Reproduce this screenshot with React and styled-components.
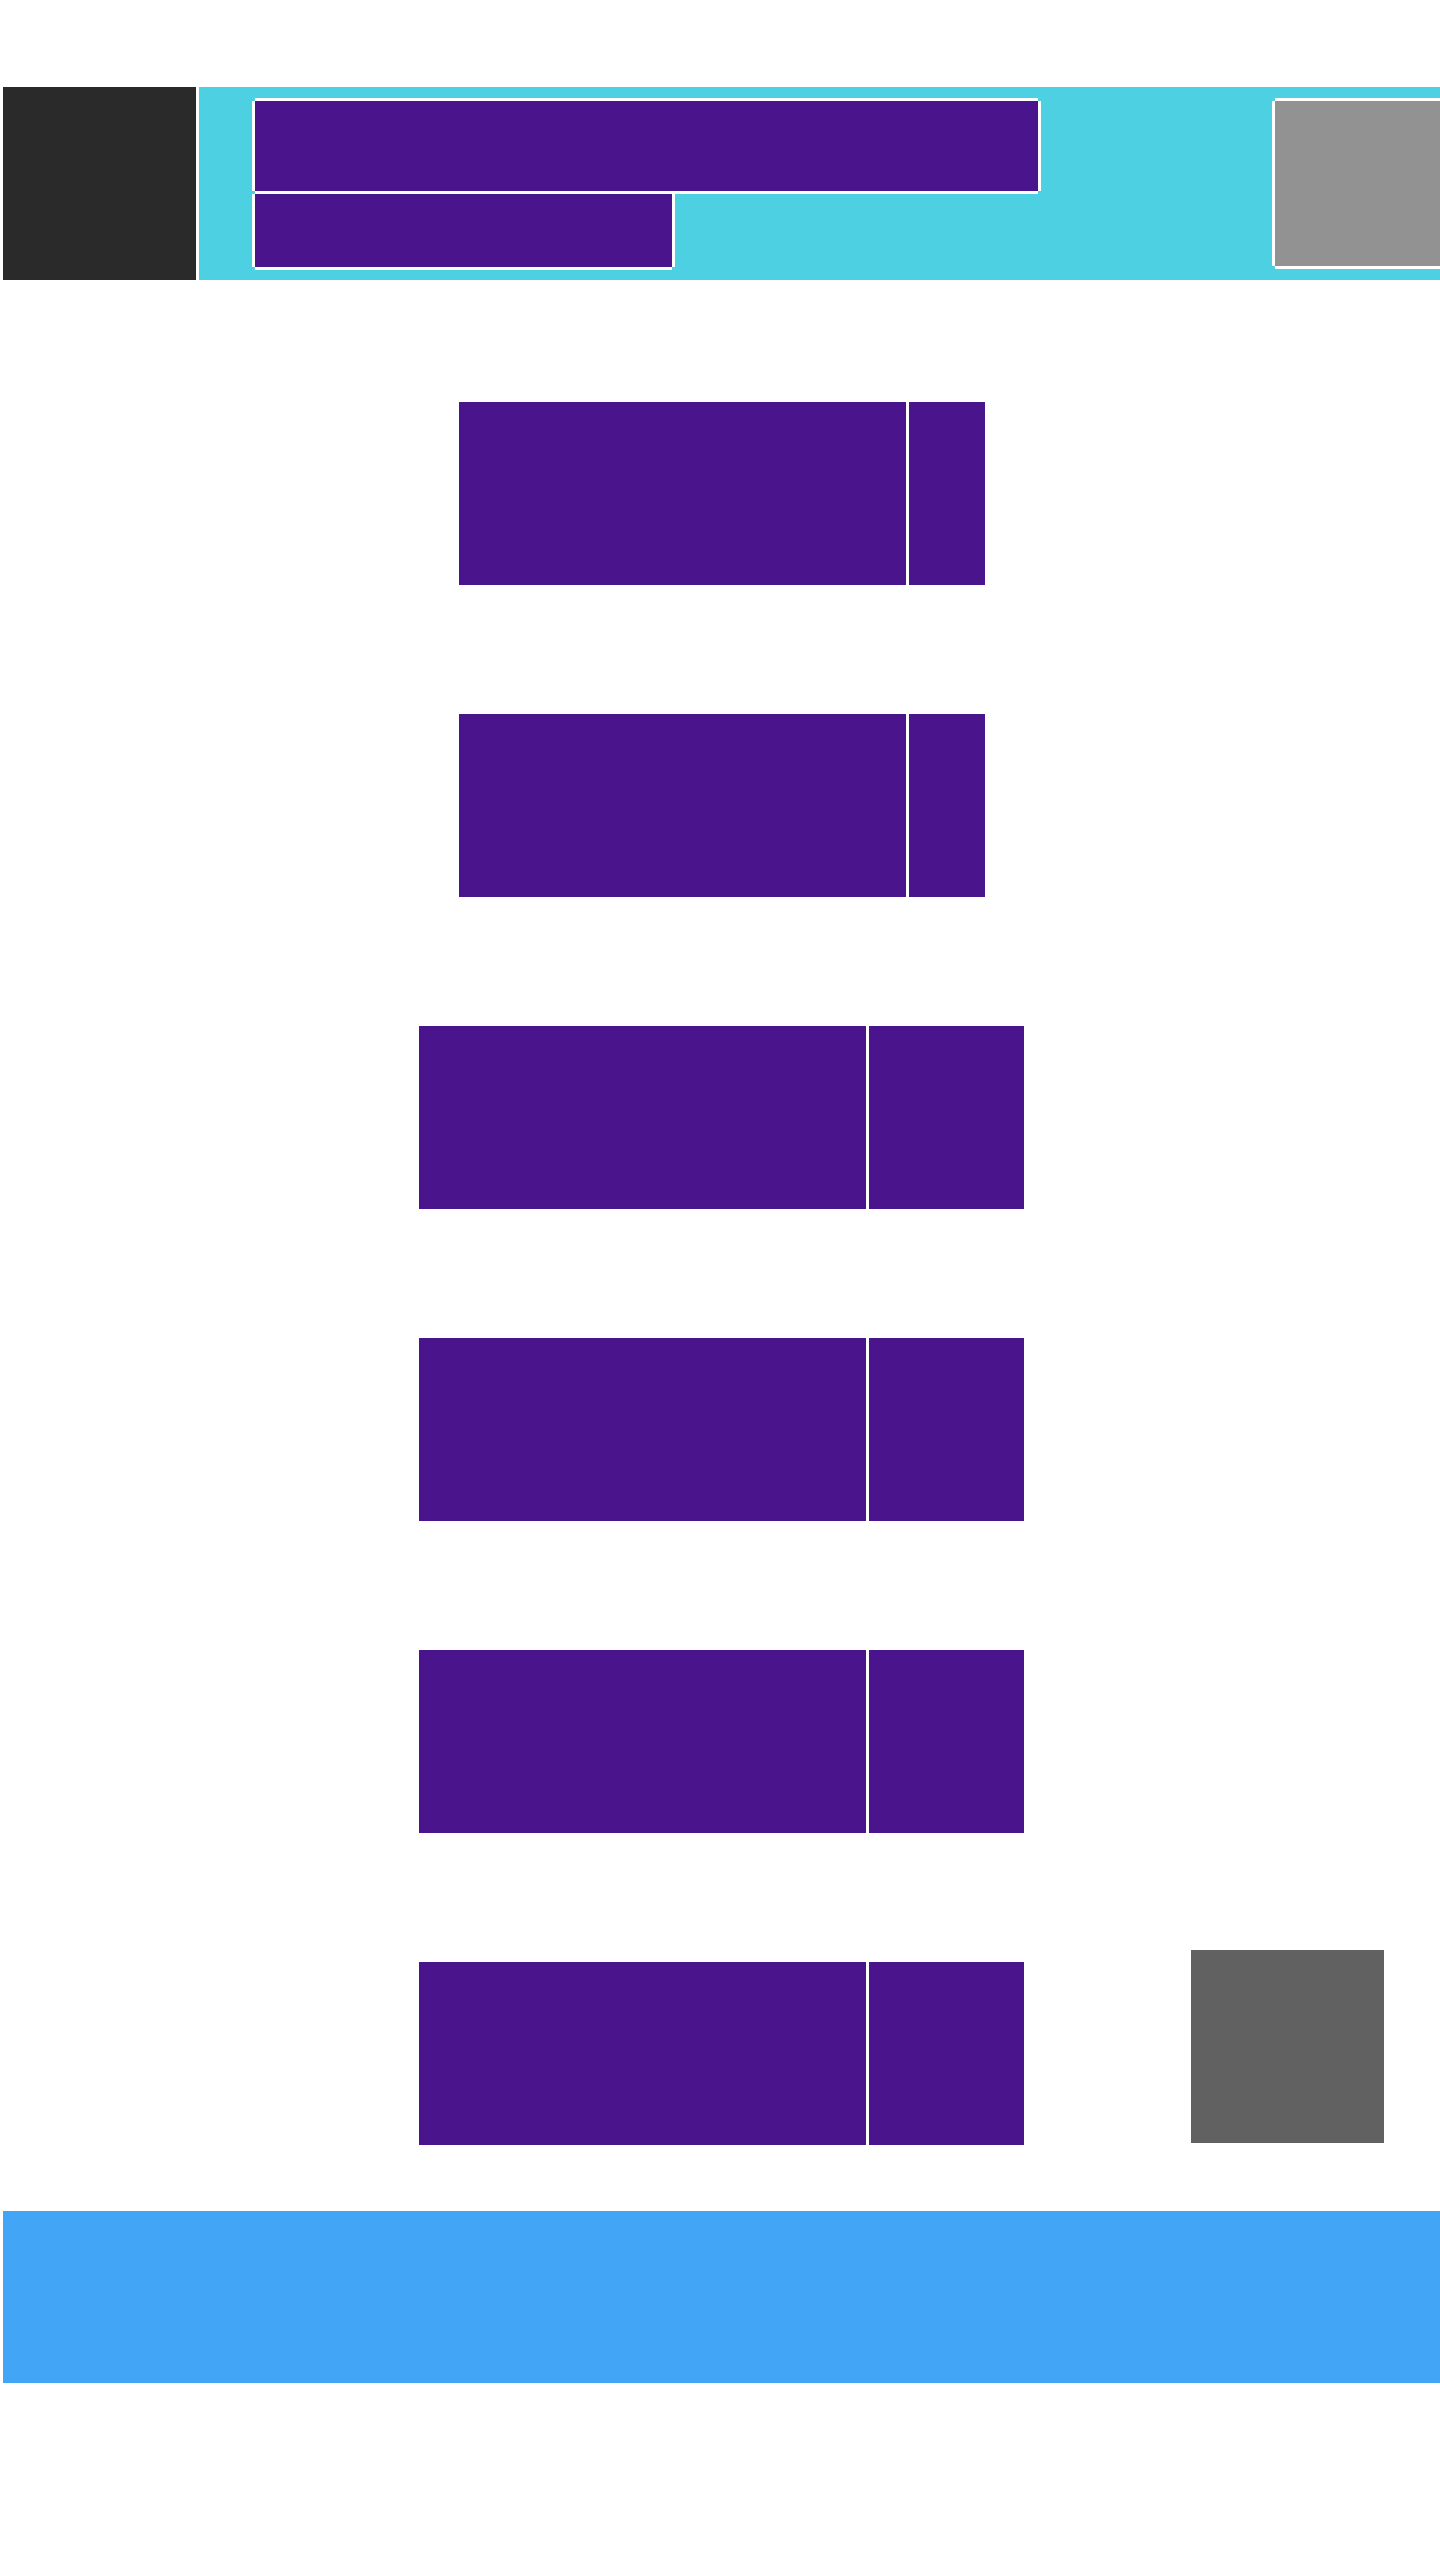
import React from "react";
import styled, { createGlobalStyle } from "styled-components";

const GlobalStyle = createGlobalStyle`
    body {
        margin: 0;
        background: #ffffff;
        font-family: "Roboto", "Liberation Sans", sans-serif;
    }
`;

// white edge on each side, corners left open
const whiteEdge = `
    box-shadow: 3px 0 0 #ffffff, -3px 0 0 #ffffff, 0 3px 0 #ffffff,
        0 -3px 0 #ffffff;
`;

const Page = styled.div`
    padding: 87px 0 0 3px;
    min-height: 2560px;
    box-sizing: border-box;
`;

const Header = styled.header`
    display: flex;
    height: 193px;
`;

const Logo = styled.div`
    width: 193px;
    height: 193px;
    flex: none;
    background: #2a2a2a;
    margin-right: 3px;
`;

const HeaderBar = styled.div`
    flex: 1;
    display: flex;
    justify-content: space-between;
    align-items: flex-start;
    padding: 14px 0 0 56px;
    background: #4dd0e1;
`;

const TitleGroup = styled.div`
    display: flex;
    flex-direction: column;
    align-items: flex-start;
    gap: 3px;
`;

const TitleBlock = styled.div`
    width: ${(p) => p.$w}px;
    height: ${(p) => p.$h}px;
    background: #4a148c;
    ${whiteEdge}
`;

const Avatar = styled.div`
    width: 165px;
    height: 165px;
    flex: none;
    background: #929292;
    ${whiteEdge}
`;

const Main = styled.main`
    position: relative;
    display: flex;
    flex-direction: column;
    align-items: center;
    gap: 129px;
    padding-top: 122px;
`;

const Row = styled.div`
    display: flex;
    gap: 3px;
`;

const RowLabel = styled.div`
    width: 447px;
    height: 183px;
    background: #4a148c;
`;

const RowValue = styled.div`
    width: ${(p) => (p.$wide ? 155 : 76)}px;
    height: 183px;
    background: #4a148c;
`;

const FloatingButton = styled.div`
    position: absolute;
    right: 56px;
    bottom: 2px;
    width: 193px;
    height: 193px;
    background: #616161;
`;

const Footer = styled.footer`
    margin-top: 66px;
    height: 172px;
    background: #42a5f5;
`;

const rows = [
    { id: 1, wide: false },
    { id: 2, wide: false },
    { id: 3, wide: true },
    { id: 4, wide: true },
    { id: 5, wide: true },
    { id: 6, wide: true },
];

export default function App() {
    return (
        <>
            <GlobalStyle />
            <Page>
                <Header>
                    <Logo />
                    <HeaderBar>
                        <TitleGroup>
                            <TitleBlock $w={783} $h={90} />
                            <TitleBlock $w={417} $h={73} />
                        </TitleGroup>
                        <Avatar />
                    </HeaderBar>
                </Header>
                <Main>
                    {rows.map((row) => (
                        <Row key={row.id}>
                            <RowLabel />
                            <RowValue $wide={row.wide} />
                        </Row>
                    ))}
                    <FloatingButton />
                </Main>
                <Footer />
            </Page>
        </>
    );
}
